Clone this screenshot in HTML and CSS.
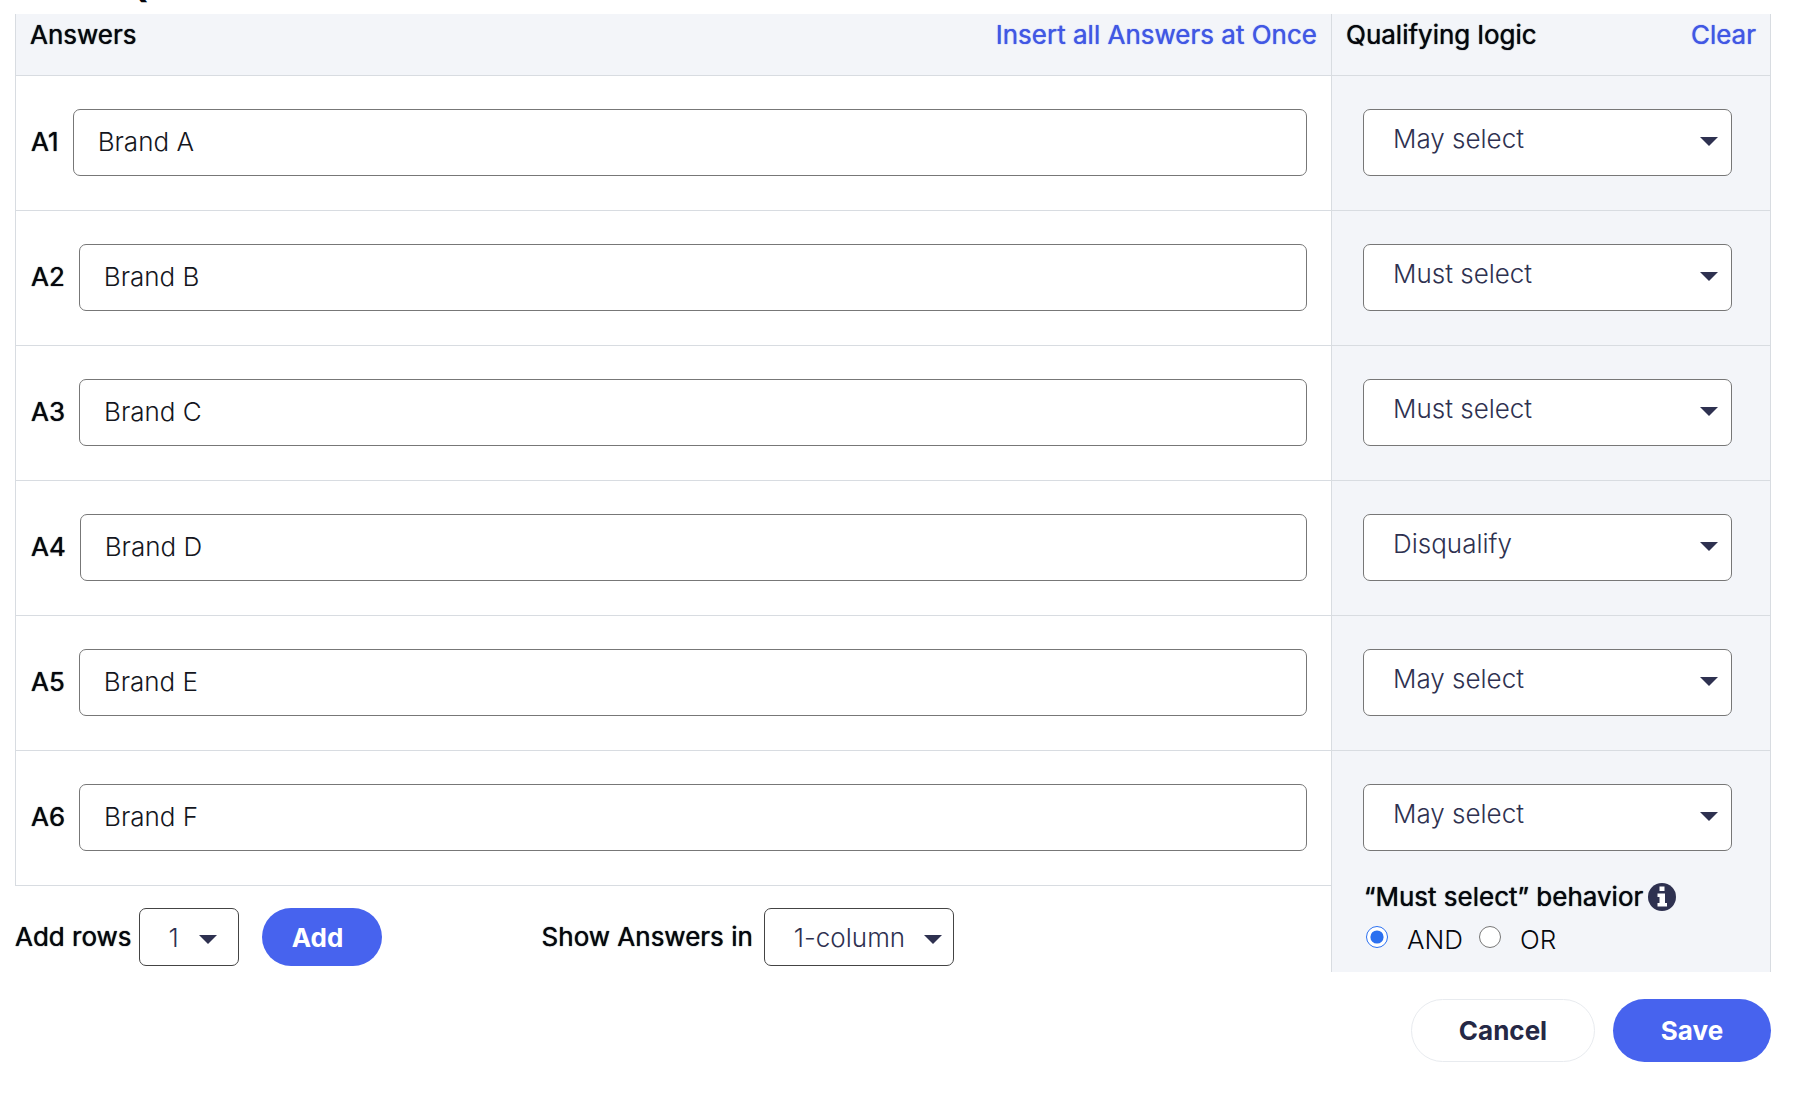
FILE: index.html
```html
<!DOCTYPE html>
<html lang="en">
<head>
<meta charset="utf-8">
<title>New Question</title>
<link rel="stylesheet" href="styles.css">
</head>
<body>
<main class="page">
  <div class="title-strip"><h1 class="title">New Question</h1></div>
  <form class="editor">
    <table class="answers">
      <colgroup><col><col class="logic-col"></colgroup>
      <thead>
        <tr>
          <th scope="col"><div class="head"><span class="strong">Answers</span><a class="link" href="#">Insert all Answers at Once</a></div></th>
          <th scope="col"><div class="head"><span class="strong">Qualifying logic</span><a class="link" href="#">Clear</a></div></th>
        </tr>
      </thead>
      <tbody>
        <tr>
          <td><div class="answer"><label class="strong" for="a1">A1</label><input class="field" id="a1" type="text" value="Brand A"></div></td>
          <td class="logic"><div class="picker"><select class="select" aria-label="Logic for A1"><option selected>May select</option><option>Must select</option><option>Disqualify</option></select></div></td>
        </tr>
        <tr>
          <td><div class="answer"><label class="strong" for="a2">A2</label><input class="field" id="a2" type="text" value="Brand B"></div></td>
          <td class="logic"><div class="picker"><select class="select" aria-label="Logic for A2"><option>May select</option><option selected>Must select</option><option>Disqualify</option></select></div></td>
        </tr>
        <tr>
          <td><div class="answer"><label class="strong" for="a3">A3</label><input class="field" id="a3" type="text" value="Brand C"></div></td>
          <td class="logic"><div class="picker"><select class="select" aria-label="Logic for A3"><option>May select</option><option selected>Must select</option><option>Disqualify</option></select></div></td>
        </tr>
        <tr>
          <td><div class="answer"><label class="strong" for="a4">A4</label><input class="field" id="a4" type="text" value="Brand D"></div></td>
          <td class="logic"><div class="picker"><select class="select" aria-label="Logic for A4"><option>May select</option><option>Must select</option><option selected>Disqualify</option></select></div></td>
        </tr>
        <tr>
          <td><div class="answer"><label class="strong" for="a5">A5</label><input class="field" id="a5" type="text" value="Brand E"></div></td>
          <td class="logic"><div class="picker"><select class="select" aria-label="Logic for A5"><option selected>May select</option><option>Must select</option><option>Disqualify</option></select></div></td>
        </tr>
        <tr>
          <td><div class="answer"><label class="strong" for="a6">A6</label><input class="field" id="a6" type="text" value="Brand F"></div></td>
          <td class="logic"><div class="picker"><select class="select" aria-label="Logic for A6"><option selected>May select</option><option>Must select</option><option>Disqualify</option></select></div></td>
        </tr>
      </tbody>
    </table>
    <div class="below">
      <div class="controls">
        <div class="group">
          <label class="strong" for="rows">Add rows</label>
          <div class="picker small rows-picker"><select class="select compact" id="rows"><option>1</option><option>2</option></select></div>
          <button class="button primary add" type="button">Add</button>
        </div>
        <div class="group">
          <label class="strong" for="columns">Show Answers in</label>
          <div class="picker small columns-picker"><select class="select compact" id="columns"><option>1-column</option><option>2-column</option></select></div>
        </div>
      </div>
      <fieldset class="behavior" aria-labelledby="behavior-title">
        <div class="behavior-title">
          <span class="strong" id="behavior-title">“Must select” behavior</span>
          <svg class="info" viewBox="0 0 28 28" aria-hidden="true"><circle cx="14" cy="14" r="14" fill="#2e3150"/><path fill="#fff" d="M11.500 3.500h5v4.500h-5zM9.500 10.500h7.500v9.500h2v3.500h-9.500V20h2v-6h-2z"/></svg>
        </div>
        <div class="choices">
          <label class="choice"><input class="radio" type="radio" name="mode" checked>AND</label>
          <label class="choice"><input class="radio" type="radio" name="mode">OR</label>
        </div>
      </fieldset>
    </div>
    <div class="actions">
      <button class="button cancel" type="button">Cancel</button>
      <button class="button primary save" type="submit">Save</button>
    </div>
  </form>
</main>
</body>
</html>
```
FILE: styles.css
```css
*, *::before, *::after { box-sizing: border-box; }
body {
  margin: 0;
  background: #fff;
  color: #05070d;
  font: 400 26px/32px Inter, "Liberation Sans", sans-serif;
}
.page { padding: 0 29px 0 15px; }
.title-strip {
  height: 14px;
  overflow: hidden;
  display: flex;
  align-items: flex-end;
}
.title { margin: 0 0 5px; font-size: 42px; line-height: 48px; font-weight: 700; }
.strong, .link { text-shadow: 0 0 1px currentColor; }
.answers { width: 100%; border-collapse: collapse; table-layout: fixed; }
.logic-col { width: 439px; }
.answers th, .answers td { border: 1px solid #d8dce1; padding: 0; font-weight: 400; text-align: left; }
.answers th { border-top: 0; background: #f3f5f9; }
.head { height: 61px; padding: 5px 14px 0; display: flex; justify-content: space-between; }
.link { color: #4157e4; text-decoration: none; }
.answers tr:last-child .logic { border-bottom: 0; }
.logic { background: #f3f5f9; }
.answer { height: 134px; padding: 0 24px 2px 15px; display: flex; align-items: center; gap: 14px; }
.field {
  flex: 1;
  min-width: 0;
  height: 67px;
  padding: 0 24px 2px;
  border: 1px solid #777;
  border-radius: 7px;
  background: #fff;
  color: #14161d;
  font: 300 26px/32px Inter, sans-serif;
}
.picker { position: relative; }
.picker::after {
  content: "";
  position: absolute;
  right: 52px;
  top: 50%;
  margin-top: -6px;
  border: 9px solid transparent;
  border-top-color: #2e3150;
  border-bottom: 0;
  pointer-events: none;
}
.logic .picker { height: 134px; padding: 33px 38px 0 31px; }
.small::after { right: 12px; margin-top: -2px; }
.rows-picker::after { right: 22px; }
.select {
  appearance: none;
  display: block;
  width: 100%;
  height: 67px;
  padding: 0 29px 8px;
  border: 1px solid #777;
  border-radius: 7px;
  background: #fff;
  color: #2e3150;
  font: 300 26px/32px Inter, sans-serif;
}
.compact { height: 58px; padding-top: 2px; padding-bottom: 0; border-color: #444; }
.rows-picker { width: 100px; }
.columns-picker { width: 190px; margin-left: 4px; }
.below { display: flex; }
.controls { flex: 1; display: flex; align-items: flex-start; gap: 160px; padding-top: 22px; }
.group { display: flex; align-items: center; gap: 7px; }
.button { border: 0; border-radius: 32px; font: 700 26px/32px Inter, sans-serif; }
.primary { background: #4763ee; color: #fff; }
.add { width: 120px; height: 58px; padding: 4px 16px 2px; margin-left: 16px; padding-right: 24px; }
.behavior {
  width: 440px;
  height: 86px;
  margin: 0;
  padding: 0 32px;
  border: 1px solid #d8dce1;
  border-width: 0 1px;
  background: #f3f5f9;
}
.behavior-title { display: flex; align-items: center; gap: 5px; height: 22px; }
.info { width: 28px; height: 28px; }
.choices { display: flex; gap: 16px; margin-top: 16px; padding-left: 2px; font-weight: 300; }
.choice { display: flex; align-items: center; gap: 19px; }
.radio { width: 22px; height: 22px; margin: 0 0 6px; accent-color: #2b70f0; }
.actions { display: flex; justify-content: flex-end; gap: 18px; margin-top: 27px; padding-bottom: 40px; }
.cancel { width: 184px; height: 63px; border: 1px solid #e8ebef; background: #fff; color: #252845; }
.save { width: 158px; height: 63px; }
```
